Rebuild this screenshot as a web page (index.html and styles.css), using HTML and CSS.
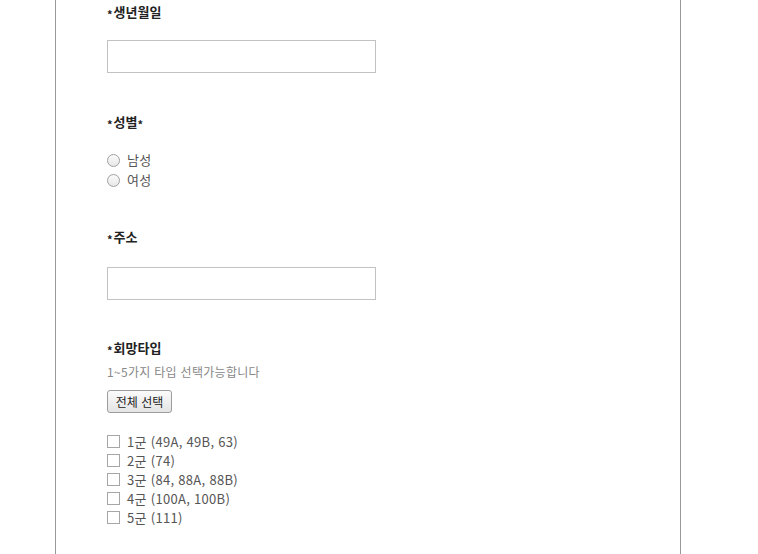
FILE: index.html
```html
<!DOCTYPE html>
<html lang="ko">
<head>
<meta charset="utf-8">
<link rel="stylesheet" href="styles.css">
</head>
<body>
<div class="page">
  <div class="form">
    <div class="label l-birth"><span class="star">*</span>생년월일</div>
    <input class="field f-birth" type="text">

    <div class="label l-gender"><span class="star">*</span>성별<span class="star">*</span></div>
    <div class="options o-gender">
      <label class="opt"><span class="radio"></span>남성</label>
      <label class="opt"><span class="radio"></span>여성</label>
    </div>

    <div class="label l-addr"><span class="star">*</span>주소</div>
    <input class="field f-addr" type="text">

    <div class="label l-type"><span class="star">*</span>회망타입</div>
    <div class="help">1~5가지 타입 선택가능합니다</div>
    <button class="btn" type="button">전체 선택</button>

    <div class="options o-type">
      <label class="opt chk"><span class="box"></span>1군 (49A, 49B, 63)</label>
      <label class="opt chk"><span class="box"></span>2군 (74)</label>
      <label class="opt chk"><span class="box"></span>3군 (84, 88A, 88B)</label>
      <label class="opt chk"><span class="box"></span>4군 (100A, 100B)</label>
      <label class="opt chk"><span class="box"></span>5군 (111)</label>
    </div>
  </div>
</div>
</body>
</html>
```

FILE: styles.css
```css
html, body {
  margin: 0;
  padding: 0;
  background: #fff;
}
body {
  font-family: "Noto Sans CJK KR", "Liberation Sans", sans-serif;
  color: #333;
}
.page {
  margin-left: 55px;
  width: 626px;
  box-sizing: border-box;
  min-height: 554px;
  border-left: 1px solid #999;
  border-right: 1px solid #999;
  padding-left: 51px;
  overflow: hidden;
}
.form {
  display: flex;
  flex-direction: column;
  align-items: flex-start;
}
.label {
  font-size: 13px;
  font-weight: bold;
  color: #222;
  line-height: 20px;
  height: 20px;
}
.star {
  font-size: 11px;
  vertical-align: -2px;
  margin: 0 1px 0 0;
}
.l-birth { margin-top: 2px; }
.l-gender { margin-top: 39px; }
.l-addr { margin-top: 37px; }
.l-type { margin-top: 38px; }
.field {
  display: block;
  box-sizing: border-box;
  width: 269px;
  height: 33px;
  border: 1px solid #c2c2c2;
  margin: 0;
  padding: 0 6px;
  background: #fff;
  outline: none;
}
.f-birth { margin-top: 18px; }
.f-addr { margin-top: 20px; }
.options {
  display: flex;
  flex-direction: column;
}
.o-gender { margin-top: 18px; }
.o-gender .opt { height: 20px; line-height: 20px; }
.o-type { margin-top: 19px; }
.o-type .opt { height: 19px; line-height: 19px; }
.opt {
  display: flex;
  align-items: center;
  font-size: 13px;
  letter-spacing: 0.3px;
  color: #555;
}
.radio {
  width: 11px;
  height: 11px;
  border: 1px solid #a0a0a0;
  border-radius: 50%;
  background: linear-gradient(#fafafa, #e8e8e8);
  margin-right: 7px;
}
.box {
  width: 11px;
  height: 11px;
  border: 1px solid #a6a6a6;
  background: #fff;
  margin-right: 7px;
}
.help {
  margin-top: 4px;
  font-size: 12px;
  letter-spacing: 0.3px;
  line-height: 20px;
  color: #888;
}
.btn {
  margin-top: 8px;
  height: 23px;
  width: 65px;
  padding: 0;
  font-family: "Noto Sans CJK KR", "Liberation Sans", sans-serif;
  font-size: 12px;
  color: #222;
  border: 1px solid #9c9c9c;
  border-radius: 3px;
  background: linear-gradient(#fbfbfb, #e4e4e4);
}
```
